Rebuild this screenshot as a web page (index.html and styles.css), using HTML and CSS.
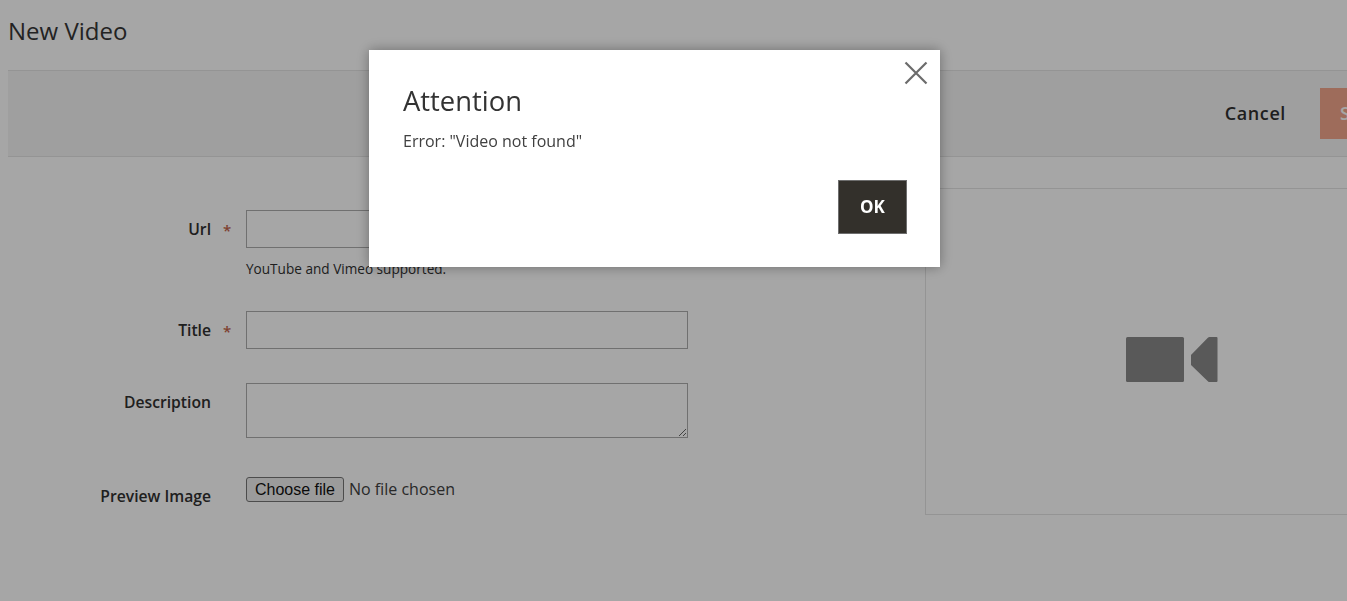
FILE: index.html
```html
<!DOCTYPE html>
<html lang="en">
<head>
<meta charset="utf-8">
<title>New Video</title>
<link rel="stylesheet" href="styles.css">
</head>
<body>
<div class="page">
  <h1 class="page-title">New Video</h1>
  <div class="toolbar">
    <button class="btn-cancel" type="button">Cancel</button>
    <button class="btn-save" type="button">Save</button>
  </div>
  <div class="content">
    <form class="form">
      <div class="field field-url">
        <label class="label">Url</label><span class="star">*</span>
        <div class="control">
          <input class="input" type="text">
          <p class="note">YouTube and Vimeo supported.</p>
        </div>
      </div>
      <div class="field field-title">
        <label class="label">Title</label><span class="star">*</span>
        <div class="control"><input class="input" type="text"></div>
      </div>
      <div class="field field-desc">
        <label class="label">Description</label><span class="star"></span>
        <div class="control"><textarea class="textarea"></textarea></div>
      </div>
      <div class="field field-file">
        <label class="label label-file">Preview Image</label><span class="star"></span>
        <div class="control file-row">
          <span class="file-btn">Choose file</span><span class="file-name">No file chosen</span>
        </div>
      </div>
    </form>
    <div class="preview">
      <svg class="video-icon" width="92" height="45" viewBox="0 0 92 45" aria-hidden="true">
        <rect x="0" y="0" width="58" height="45" rx="1.5" fill="#898989"/>
        <path d="M90.500 0a1 1 0 0 1 1 1V44a1 1 0 0 1-1 1H83.500a2 2 0 0 1-1.400-.6L65 28V18L82.100 .6A2 2 0 0 1 83.500 0Z" fill="#898989"/>
      </svg>
    </div>
  </div>
</div>
<div class="overlay"></div>
<div class="modal">
  <button class="modal-close" type="button" aria-label="Close">
    <svg width="24" height="24" viewBox="0 0 24 24" aria-hidden="true"><path d="M1.500 1.500 22.500 22.500M22.500 1.500 1.500 22.500" stroke="#6b6b6b" stroke-width="2.200" fill="none"/></svg>
  </button>
  <h2 class="modal-title">Attention</h2>
  <p class="modal-text">Error: "Video not found"</p>
  <div class="modal-actions"><button class="btn-ok" type="button">OK</button></div>
</div>
</body>
</html>
```
FILE: styles.css
```css
* { box-sizing: border-box; }
html, body { margin: 0; height: 100%; overflow: hidden; }
body {
  background: #fff;
  color: #303030;
  font-family: "Open Sans", "Noto Sans", sans-serif;
}
.page { width: 1347px; height: 601px; padding: 0 0 0 8px; overflow: hidden; }
.page-title {
  margin: 0;
  height: 70px;
  padding-top: 14px;
  font-size: 24px;
  line-height: 34px;
  font-weight: 400;
  color: #363636;
}
.toolbar {
  height: 87px;
  margin-right: -60px;
  background: #f5f5f5;
  border-top: 1px solid #e3e3e3;
  border-bottom: 1px solid #e3e3e3;
  display: flex;
  justify-content: flex-end;
  align-items: flex-start;
  padding-top: 17px;
}
.btn-cancel {
  border: 0;
  background: none;
  padding: 0;
  margin: 0 34px 0 0;
  height: 51px;
  font: 600 18px/51px "Open Sans", sans-serif;
  letter-spacing: .6px;
  color: #303030;
}
.btn-save {
  width: 87px;
  height: 51px;
  border: 0;
  padding: 0 0 0 20px;
  text-align: left;
  background: #f3a78d;
  color: #fff;
  font: 600 18px/51px "Open Sans", sans-serif;
}
.content { display: flex; align-items: flex-start; }
.form { flex: none; width: 917px; padding-top: 53px; }
.field { display: flex; align-items: flex-start; }
.field-title { margin-top: 33px; }
.field-desc { margin-top: 34px; }
.field-file { margin-top: 39px; }
.label {
  width: 203px;
  text-align: right;
  font-size: 15.700px;
  font-weight: 600;
  line-height: 20px;
  padding-top: 9px;
  color: #303030;
}
.star {
  width: 35px;
  padding: 10px 0 0 12px;
  font-size: 15px;
  line-height: 20px;
  font-weight: 600;
  color: #c2634a;
}
.control { width: 442px; }
.input {
  display: block;
  width: 442px;
  height: 38px;
  border: 1px solid #adadad;
  background: #fff;
  margin: 0;
}
.textarea {
  display: block;
  width: 442px;
  height: 55px;
  border: 1px solid #adadad;
  background: #fff;
  margin: 0;
  resize: vertical;
}
.note {
  margin: 12px 0 0;
  font-size: 13.600px;
  line-height: 18px;
  color: #303030;
}
.file-row { display: flex; align-items: center; height: 25px; }
.file-btn {
  width: 98px;
  height: 25px;
  border: 1px solid #767676;
  border-radius: 3px;
  background: #efefef;
  color: #111;
  font: 16px/23px "Liberation Sans", Arial, sans-serif;
  text-align: center;
}
.file-name {
  margin: 0 0 2px 5px;
  font-size: 16px;
  color: #404040;
}
.preview {
  flex: none;
  width: 500px;
  height: 327px;
  margin-top: 31px;
  border: 1px solid #e3e3e3;
  padding: 148px 0 0 200px;
}
.video-icon { display: block; }
.overlay {
  position: fixed;
  inset: 0;
  background: rgba(0, 0, 0, .35);
}
.modal {
  position: fixed;
  left: 369px;
  top: 50px;
  width: 571px;
  height: 217px;
  background: #fff;
  box-shadow: 0 0 12px rgba(0, 0, 0, .35);
  padding: 32px 33px 0 34px;
}
.modal-close {
  position: absolute;
  top: 11px;
  right: 12px;
  width: 24px;
  height: 24px;
  padding: 0;
  border: 0;
  background: none;
}
.modal-close svg { display: block; }
.modal-title {
  margin: 0;
  font-size: 27.400px;
  line-height: 38px;
  font-weight: 400;
  color: #333;
}
.modal-text {
  margin: 11px 0 0;
  font-size: 16px;
  line-height: 20px;
  color: #404040;
}
.modal-actions { display: flex; justify-content: flex-end; margin-top: 29px; }
.btn-ok {
  width: 69px;
  height: 54px;
  border: 1px solid #6e6e6e;
  background: #33302b;
  color: #fff;
  font: 700 17px/52px "Open Sans", sans-serif;
  padding: 0;
}
```
